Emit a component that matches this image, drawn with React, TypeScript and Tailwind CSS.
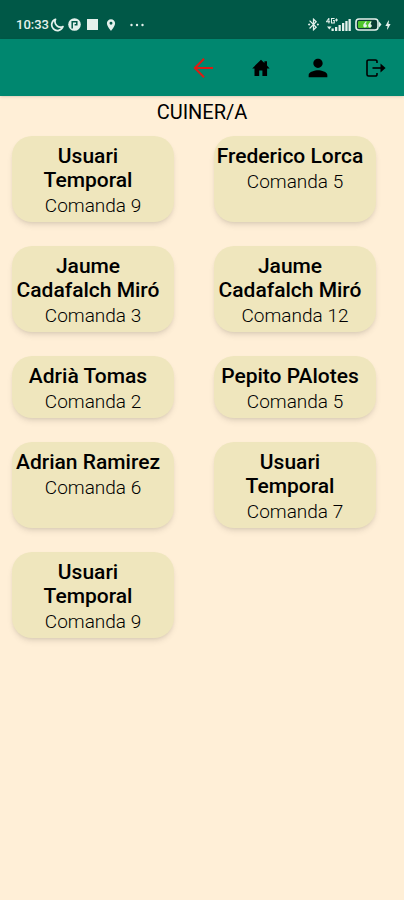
import React from 'react';
import { MdPerson, MdBluetoothConnected, MdLocationOn, MdBolt } from 'react-icons/md';

interface Order {
  name: string;
  order: number;
}

const ORDERS: Order[] = [
  { name: 'Usuari Temporal', order: 9 },
  { name: 'Frederico Lorca', order: 5 },
  { name: 'Jaume Cadafalch Miró', order: 3 },
  { name: 'Jaume Cadafalch Miró', order: 12 },
  { name: 'Adrià Tomas', order: 2 },
  { name: 'Pepito PAlotes', order: 5 },
  { name: 'Adrian Ramirez', order: 6 },
  { name: 'Usuari Temporal', order: 7 },
  { name: 'Usuari Temporal', order: 9 },
];

const BackIcon: React.FC = () => (
  <svg width="24" height="24" viewBox="0 0 24 24" fill="none" stroke="currentColor" strokeWidth="2" aria-hidden="true">
    <path d="M21 12H3.5M12 2.8 2.8 12l9.2 9.2" />
  </svg>
);

const HomeIcon: React.FC = () => (
  <svg width="24" height="24" viewBox="0 0 24 24" fill="currentColor" aria-hidden="true">
    <path d="M12 3.7 3.2 12.4h2.3v7.6h4.7v-5.500h3.200V20h4.700v-7.600h2.500L18 9.500V5.300h-2.600v1.700z" />
  </svg>
);

const LogoutIcon: React.FC = () => (
  <svg width="24" height="24" viewBox="0 0 24 24" fill="none" stroke="currentColor" strokeWidth="1.6" aria-hidden="true">
    <path d="M14 7V5.500A1.500 1.500 0 0 0 12.500 4H5.500A1.500 1.500 0 0 0 4 5.500v13A1.500 1.500 0 0 0 5.500 20h7a1.500 1.500 0 0 0 1.500-1.500V17" />
    <path d="M9.500 12H20" />
    <path d="M17.500 7.400 22.600 12l-5.100 4.600z" fill="currentColor" stroke="none" />
  </svg>
);

const SignalIcon: React.FC = () => (
  <svg width="26" height="14" viewBox="0 0 26 14" fill="currentColor" aria-hidden="true">
    <path d="M3.500 0 1 3.400v.8h2.400v1.300h1V4.200h.8v-.9h-.8V0zm-.1 1.700v1.600H2.200zM6 0h3.600v1H7v3.500h1.700V3H8V2h1.800v3.500H6zM11 1.500h-1v1h1v1h1v-1h1v-1h-1v-1h-1z" />
    <path d="M2 8.500h4.500l-2.200 3zM6.500 10.500h2.300V13H6.500zM10 9h2.300v4H10zM13.500 7h2.300v6h-2.300zM17 5h2.300v8H17zM20.300 3h2.300v10h-2.300zM23.500 1h2.300v12h-2.300z" />
  </svg>
);

const BatteryIcon: React.FC = () => (
  <svg width="27" height="13" viewBox="0 0 27 13" aria-hidden="true">
    <rect x="1" y="1" width="22" height="11" rx="3" fill="#0a3b33" stroke="#e4f1ec" strokeWidth="1.6" />
    <path d="M4 3h12v7H4a1 1 0 0 1-1-1V4a1 1 0 0 1 1-1z" fill="#4fc52c" />
    <path d="M24 3.500l2.500 3-2.500 3z" fill="#e4f1ec" />
    <path d="M10.500 3.600 8.400 6.500c-.5 2 .3 2.900 1.500 2.900s2-.7 2-1.700-.8-1.600-1.600-1.500l1.600-2.600zM15.500 3.600l-2.200 2.900c-.5 2 .3 2.900 1.500 2.900s2-.7 2-1.700-.8-1.600-1.600-1.500l1.600-2.600z" fill="#e4f1ec" />
  </svg>
);

const StatusBar: React.FC = () => (
  <div className="flex h-[39px] items-center justify-between bg-[#005847] pt-2.5 pr-3 pl-4 text-[#e4f1ec]">
    <div className="flex items-center">
      <span className="text-[13px] font-medium">10:33</span>
      <svg width="14" height="14" viewBox="0 0 14 14" className="ml-px" aria-hidden="true">
        <path d="M5.500 1.300A5.800 5.800 0 1 0 13 8.600 5.600 5.600 0 0 1 5.500 1.300z" fill="none" stroke="currentColor" strokeWidth="1.7" strokeLinejoin="round" />
      </svg>
      <svg width="13" height="13" viewBox="0 0 13 13" className="ml-1" aria-hidden="true">
        <circle cx="6.500" cy="6.500" r="6.300" fill="currentColor" />
        <path d="M4.200 10.500V3.800h4.600v3H6.600" fill="none" stroke="#005847" strokeWidth="1.5" />
      </svg>
      <div className="ml-1.5 h-[11px] w-[11px] bg-current"></div>
      <MdLocationOn size={14} className="ml-1.5" />
      <svg width="14" height="4" viewBox="0 0 14 4" fill="currentColor" className="ml-3" aria-hidden="true">
        <circle cx="1.5" cy="2" r="1.2" />
        <circle cx="7" cy="2" r="1.2" />
        <circle cx="12.5" cy="2" r="1.2" />
      </svg>
    </div>
    <div className="flex items-center">
      <MdBluetoothConnected size={15} className="mr-1" />
      <SignalIcon />
      <span className="ml-1">
        <BatteryIcon />
      </span>
      <MdBolt size={12} className="-mr-0.5" />
    </div>
  </div>
);

const Toolbar: React.FC = () => (
  <nav className="flex h-[57px] items-center justify-end gap-[33px] bg-[#00876f] pr-[17px] shadow">
    <button aria-label="Enrere" className="text-[#dc1c13]">
      <BackIcon />
    </button>
    <button aria-label="Inici">
      <HomeIcon />
    </button>
    <button aria-label="Perfil">
      <MdPerson size={28} className="-mx-0.5" />
    </button>
    <button aria-label="Sortir">
      <LogoutIcon />
    </button>
  </nav>
);

const OrderCard: React.FC<Order> = ({ name, order }) => (
  <article className="mr-7 ml-3 rounded-[20px] bg-[#efe6bd] pt-2 pb-1 text-center shadow-md">
    <h2 className="pr-3 pl-0.5 text-[21px] leading-6 font-medium">{name}</h2>
    <p className="mt-0.5 text-[19px] leading-6 font-light">Comanda {order}</p>
  </article>
);

export default function App() {
  return (
    <div className="min-h-screen bg-[#ffefd7] font-['Roboto',sans-serif] text-black">
      <header>
        <StatusBar />
        <Toolbar />
      </header>
      <main>
        <h1 className="pt-1 text-center text-xl leading-6 font-normal">CUINER/A</h1>
        <div className="mt-3 grid grid-cols-2 gap-y-6">
          {ORDERS.map((item, i) => (
            <OrderCard key={i} {...item} />
          ))}
        </div>
      </main>
    </div>
  );
}
